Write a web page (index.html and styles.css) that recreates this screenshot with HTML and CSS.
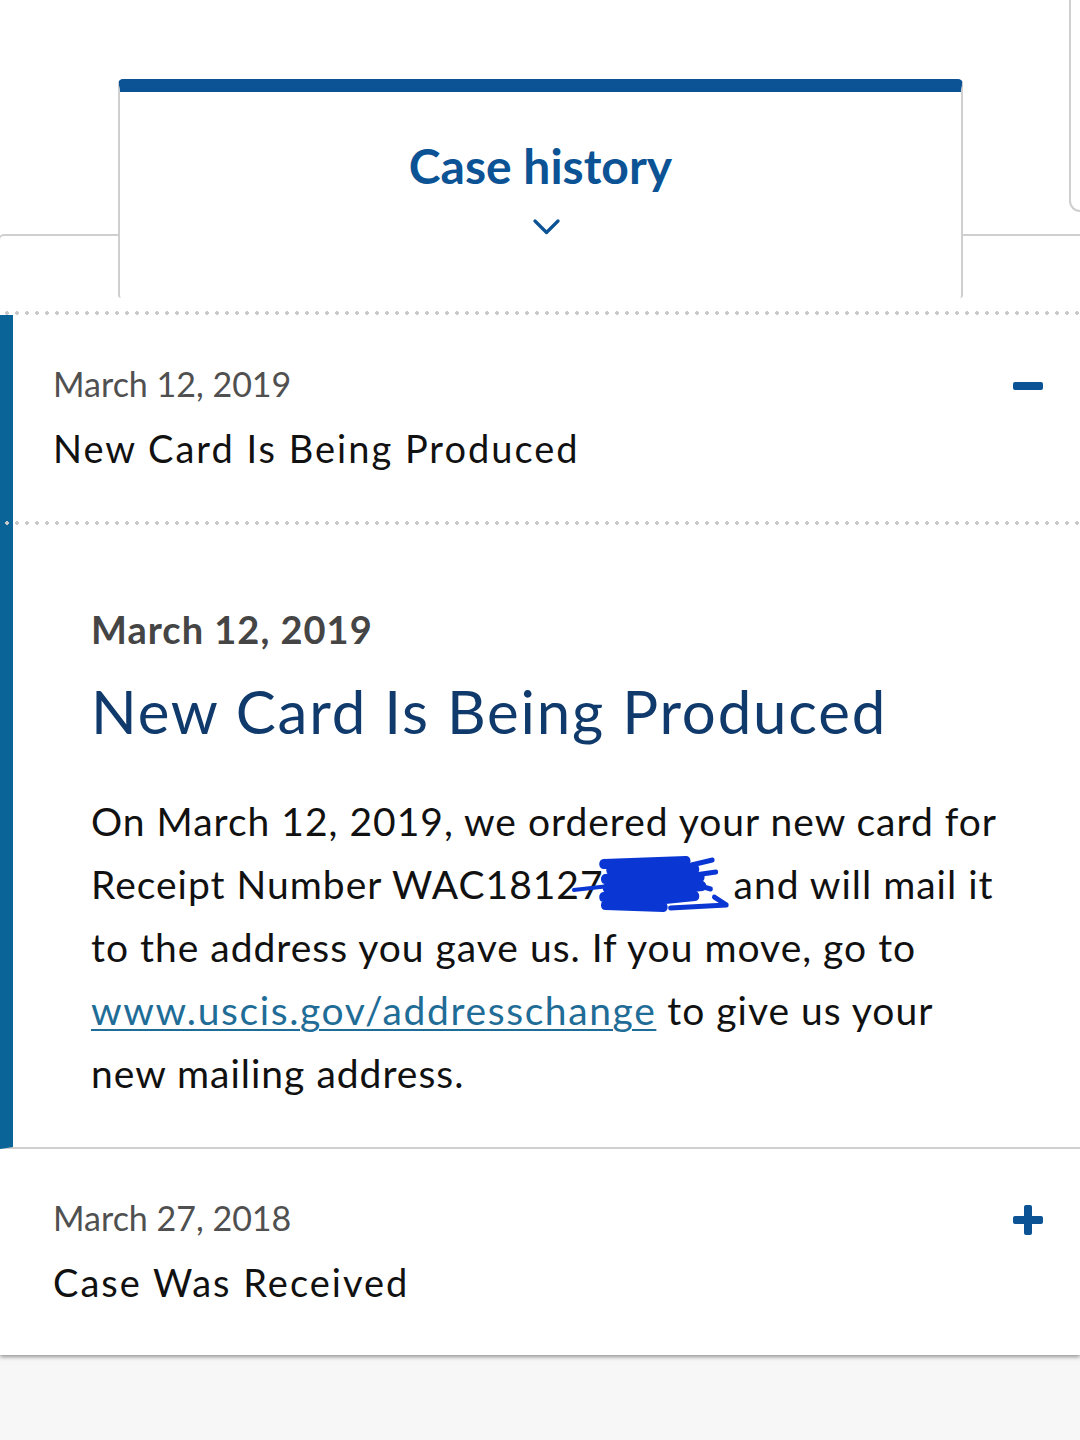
FILE: index.html
```html
<!DOCTYPE html>
<html lang="en">
<head>
    <meta charset="UTF-8">
    <meta name="viewport" content="width=device-width, initial-scale=1.0">
    <title>Case history</title>
    <link rel="stylesheet" href="styles.css">
</head>
<body>
    <div class="panel">
        <div class="tabs">
            <div class="tab-side tab-side-left">
                <div class="tab-line"></div>
            </div>
            <div class="tab tab-active">
                <h2 class="tab-title">Case history</h2>
                <svg class="chevron" width="27" height="17" viewBox="0 0 27 17">
                    <polyline points="2,2 13.5,13.5 25,2" fill="none" stroke="#0b5394" stroke-width="3.2" stroke-linecap="round" stroke-linejoin="round"/>
                </svg>
            </div>
            <div class="tab-side tab-side-right">
                <div class="tab-peek"></div>
                <div class="tab-line"></div>
            </div>
        </div>

        <div class="dots"></div>

        <div class="history-item open">
            <div class="item-head">
                <div class="item-text">
                    <div class="item-date">March 12, 2019</div>
                    <div class="item-title">New Card Is Being Produced</div>
                </div>
                <svg class="toggle" width="30" height="30" viewBox="0 0 30 30">
                    <rect x="0" y="11" width="30" height="8" rx="2" fill="#0b5394"/>
                </svg>
            </div>
            <div class="dots dots-inner"></div>
            <div class="item-detail">
                <h3 class="detail-date">March 12, 2019</h3>
                <h1 class="detail-title">New Card Is Being Produced</h1>
                <p class="detail-text">On March 12, 2019, we ordered your new card for Receipt Number WAC18127<span class="redact"><svg width="158" height="60" viewBox="0 0 180 60" preserveAspectRatio="none">
                    <g fill="none" stroke="#0a36d4" stroke-linecap="round" stroke-linejoin="round">
                        <path d="M2 35 L42 31" stroke-width="4"/>
                        <path d="M36 9 L130 6 L44 15 L140 14 L38 24 L146 22 L40 33 L148 31 L36 42 L140 41 L38 50 L104 52" stroke-width="10"/>
                        <path d="M112 53 L176 50 L162 42" stroke-width="5"/>
                        <path d="M136 10 L160 5 M140 20 L164 17 M142 30 L158 34" stroke-width="5"/>
                    </g>
                </svg></span> and will mail it to the address you gave us. If you move, go to <a href="#">www.uscis.gov/addresschange</a> to give us your new mailing address.</p>
            </div>
        </div>

        <div class="history-item">
            <div class="item-head">
                <div class="item-text">
                    <div class="item-date">March 27, 2018</div>
                    <div class="item-title">Case Was Received</div>
                </div>
                <svg class="toggle" width="30" height="30" viewBox="0 0 30 30">
                    <rect x="0" y="11" width="30" height="8" rx="2" fill="#0b5394"/>
                    <rect x="11" y="0" width="8" height="30" rx="2" fill="#0b5394"/>
                </svg>
            </div>
        </div>
    </div>
</body>
</html>
```

FILE: styles.css
```css
* {
    margin: 0;
    padding: 0;
    box-sizing: border-box;
    font-family: Lato, 'Liberation Sans', sans-serif;
}

body {
    background: #f7f7f7;
}

.panel {
    background: white;
    box-shadow: 0 2px 4px rgba(0,0,0,0.4);
    margin-bottom: 8px;
}

/* tabs */

.tabs {
    display: flex;
    height: 298px;
    margin-bottom: 13px;
    overflow: hidden;
}

.tab-side {
    display: flex;
    flex-direction: column;
    justify-content: flex-end;
}

.tab-side-left {
    width: 118px;
}

.tab-side-right {
    flex: 1;
}

.tab-line {
    height: 64px;
    border-top: 2px solid #cfcfcf;
}

.tab-side-left .tab-line {
    margin-left: -2px;
    border-left: 2px solid #cfcfcf;
    border-top-left-radius: 6px;
}

.tab-peek {
    height: 212px;
    margin-left: 106px;
    margin-bottom: auto;
    border-left: 2px solid #cfcfcf;
    border-bottom: 2px solid #cfcfcf;
    border-bottom-left-radius: 12px;
}

.tab {
    width: 845px;
    margin-top: 79px;
    border: 2px solid #cfcfcf;
    border-top: 13px solid #0b5394;
    border-bottom: none;
    border-radius: 5px 5px 3px 3px;
    text-align: center;
    padding-top: 46px;
}

.tab-title {
    color: #0b5394;
    font-size: 48px;
    line-height: 56px;
    font-weight: 700;
}

.chevron {
    display: block;
    margin: 25px auto 0;
    position: relative;
    left: 6px;
}

.dots {
    height: 4px;
    background: radial-gradient(circle, #c9c9c9 1.6px, transparent 2.1px) 2px 0 / 10px 4px repeat-x;
}

/* history items */

.history-item {
    padding-left: 53px;
}

.history-item.open {
    padding-left: 0;
    border-left: 13px solid #0a6497;
    border-bottom: 2px solid #cfcfcf;
}

.item-head {
    display: flex;
    justify-content: space-between;
    align-items: flex-start;
    padding: 49px 37px 51px 0;
}

.open .item-head {
    padding-left: 40px;
}

.item-date {
    color: #505050;
    font-size: 34px;
    line-height: 40px;
}

.item-title {
    color: #111;
    font-size: 38px;
    line-height: 44px;
    letter-spacing: 2px;
    margin-top: 22px;
}

.toggle {
    margin-top: 7px;
    flex-shrink: 0;
}

.dots-inner {
    margin-left: -13px;
}

.item-detail {
    padding: 81px 80px 42px 78px;
}

.detail-date {
    color: #454545;
    font-size: 38px;
    line-height: 46px;
    font-weight: 700;
    letter-spacing: 1px;
}

.detail-title {
    color: #0f3a6b;
    font-size: 60px;
    line-height: 72px;
    font-weight: 400;
    letter-spacing: 1.8px;
    margin-top: 23px;
}

.detail-text {
    color: #111;
    font-size: 39px;
    line-height: 63px;
    letter-spacing: 1px;
    margin-top: 43px;
}

.detail-text a {
    color: #1f6d97;
    letter-spacing: 1.6px;
    text-decoration-thickness: 2px;
    text-underline-offset: 4px;
}

.redact {
    position: relative;
    display: inline-block;
    width: 119px;
    height: 38px;
}

.redact svg {
    position: absolute;
    left: -32px;
    top: -6px;
}
```
